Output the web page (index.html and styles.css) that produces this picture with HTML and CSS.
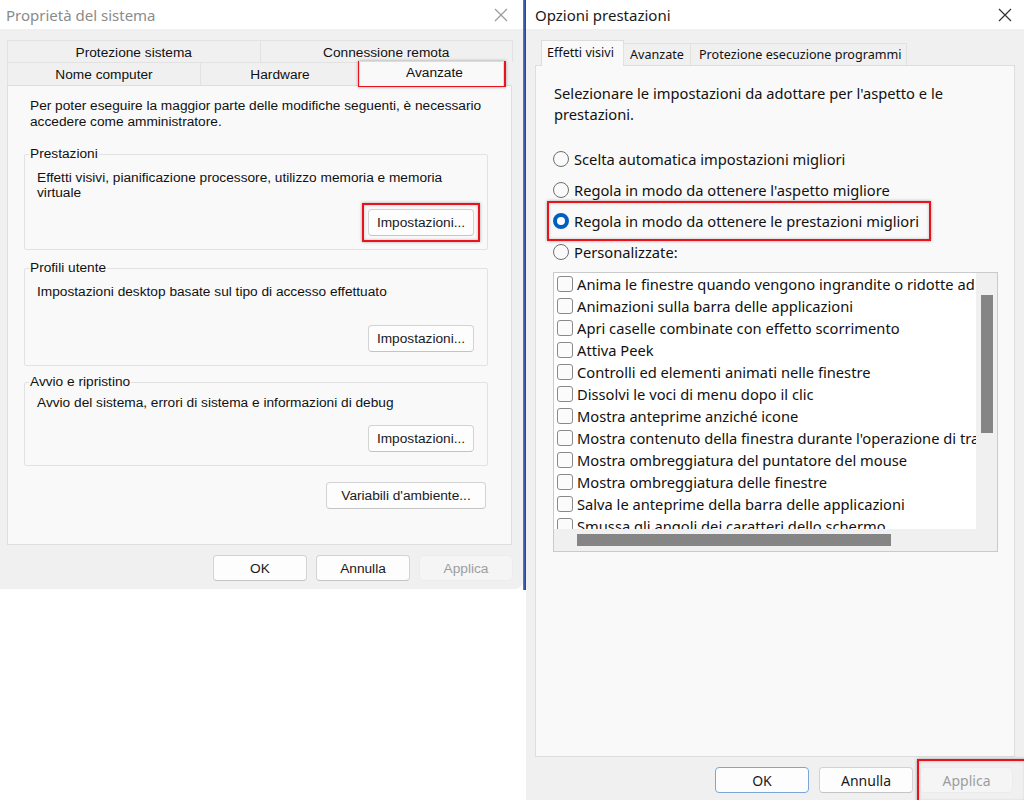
FILE: index.html
```html
<!DOCTYPE html>
<html lang="it">
<head>
<meta charset="utf-8">
<title>Proprietà del sistema - Opzioni prestazioni</title>
<link rel="stylesheet" href="styles.css">
</head>
<body>
<div class="screen">
  <div class="left-col">
    <section class="dialog sys">
      <header class="titlebar">
        <span class="title">Proprietà del sistema</span>
        <svg class="close" width="14" height="14" viewBox="0 0 14 14"><path d="M1 1 L13 13 M13 1 L1 13" stroke="currentColor" stroke-width="1.2" fill="none"/></svg>
      </header>
      <div class="sys-body">
        <div class="tabs2">
          <div class="tabrow back">
            <div class="tab half">Protezione sistema</div>
            <div class="tab half">Connessione remota</div>
          </div>
          <div class="tabrow front">
            <div class="tab t-nome">Nome computer</div>
            <div class="tab t-hw">Hardware</div>
            <div class="tab t-adv active">Avanzate</div>
            <div class="tab-rest"></div>
          </div>
        </div>
        <div class="panel sys-panel">
          <p class="intro">Per poter eseguire la maggior parte delle modifiche seguenti, è necessario<br>accedere come amministratore.</p>
          <fieldset class="group g-perf">
            <legend>Prestazioni</legend>
            <p class="gtext">Effetti visivi, pianificazione processore, utilizzo memoria e memoria<br>virtuale</p>
            <div class="btn-row"><button class="btn btn-set">Impostazioni...</button></div>
          </fieldset>
          <fieldset class="group g-prof">
            <legend>Profili utente</legend>
            <p class="gtext">Impostazioni desktop basate sul tipo di accesso effettuato</p>
            <div class="btn-row"><button class="btn btn-set">Impostazioni...</button></div>
          </fieldset>
          <fieldset class="group g-boot">
            <legend>Avvio e ripristino</legend>
            <p class="gtext">Avvio del sistema, errori di sistema e informazioni di debug</p>
            <div class="btn-row"><button class="btn btn-set">Impostazioni...</button></div>
          </fieldset>
          <div class="env-row"><button class="btn btn-env">Variabili d'ambiente...</button></div>
        </div>
        <div class="footer sys-footer">
          <button class="btn fbtn">OK</button>
          <button class="btn fbtn">Annulla</button>
          <button class="btn fbtn disabled">Applica</button>
        </div>
      </div>
      <div class="mark mark-tab"></div>
      <div class="mark mark-set"></div>
    </section>
  </div>
  <div class="divider"></div>
  <section class="dialog perf">
    <header class="titlebar">
      <span class="title">Opzioni prestazioni</span>
      <svg class="close" width="14" height="14" viewBox="0 0 14 14"><path d="M1 1 L13 13 M13 1 L1 13" stroke="currentColor" stroke-width="1.2" fill="none"/></svg>
    </header>
    <div class="perf-body">
      <div class="ptabs">
        <div class="ptab active">Effetti visivi</div>
        <div class="ptab">Avanzate</div>
        <div class="ptab">Protezione esecuzione programmi</div>
      </div>
      <div class="panel perf-panel">
        <p class="pintro">Selezionare le impostazioni da adottare per l'aspetto e le<br>prestazioni.</p>
        <div class="radios">
          <label class="radio"><span class="rb"></span>Scelta automatica impostazioni migliori</label>
          <label class="radio"><span class="rb"></span>Regola in modo da ottenere l'aspetto migliore</label>
          <label class="radio"><span class="rb on"></span>Regola in modo da ottenere le prestazioni migliori</label>
          <label class="radio"><span class="rb"></span>Personalizzate:</label>
        </div>
        <div class="listbox">
          <ul class="items">
            <li><span class="cb"></span>Anima le finestre quando vengono ingrandite o ridotte ad icona</li>
            <li><span class="cb"></span>Animazioni sulla barra delle applicazioni</li>
            <li><span class="cb"></span>Apri caselle combinate con effetto scorrimento</li>
            <li><span class="cb"></span>Attiva Peek</li>
            <li><span class="cb"></span>Controlli ed elementi animati nelle finestre</li>
            <li><span class="cb"></span>Dissolvi le voci di menu dopo il clic</li>
            <li><span class="cb"></span>Mostra anteprime anziché icone</li>
            <li><span class="cb"></span>Mostra contenuto della finestra durante l'operazione di trascinamento</li>
            <li><span class="cb"></span>Mostra ombreggiatura del puntatore del mouse</li>
            <li><span class="cb"></span>Mostra ombreggiatura delle finestre</li>
            <li><span class="cb"></span>Salva le anteprime della barra delle applicazioni</li>
            <li><span class="cb"></span>Smussa gli angoli dei caratteri dello schermo</li>
            <li><span class="cb"></span>Smussa scorrimento caselle di riepilogo</li>
          </ul>
          <div class="vscroll"><div class="vthumb"></div></div>
          <div class="hscroll"><div class="hthumb"></div></div>
          <div class="corner"></div>
        </div>
      </div>
      <div class="footer perf-footer">
        <button class="btn pbtn default">OK</button>
        <button class="btn pbtn">Annulla</button>
        <button class="btn pbtn disabled">Applica</button>
      </div>
    </div>
    <div class="mark mark-radio"></div>
    <div class="mark mark-apply"></div>
  </section>
</div>
</body>
</html>
```
FILE: styles.css
```css
* { box-sizing: border-box; }

html, body {
  margin: 0;
  padding: 0;
  background: #ffffff;
}

.screen {
  display: flex;
  width: 1024px;
  height: 800px;
  overflow: hidden;
}

/* ---------- shared window parts ---------- */
.dialog {
  position: relative;
  background: #f0f0f0;
}

.titlebar {
  height: 29px;
  background: #ffffff;
  display: flex;
  align-items: center;
  justify-content: space-between;
  font-family: "Segoe UI", "Noto Sans", sans-serif;
  font-size: 15px;
}

.close { display: block; }

.panel {
  background: #f9f9f9;
  border: 1px solid #dedede;
}

.btn {
  display: block;
  background: #fdfdfd;
  border: 1px solid #d3d3d3;
  border-bottom-color: #c4c4c4;
  border-radius: 4px;
  color: #1a1a1a;
  padding: 0;
  margin: 0;
}

.btn.disabled {
  background: #f5f5f5;
  border-color: #ececec;
  color: #9d9d9d;
}

.footer {
  display: flex;
  justify-content: flex-end;
}

/* red highlight frames drawn over the windows */
.mark {
  position: absolute;
  border: 2px solid #e8131b;
  box-shadow: 0 0 3px rgba(0, 0, 0, 0.35), inset 0 0 3px rgba(0, 0, 0, 0.25);
  pointer-events: none;
}

/* ---------- left window: Proprietà del sistema ---------- */
.left-col {
  width: 523px;
  flex: none;
}

.sys {
  height: 589px;
  border-bottom-right-radius: 8px;
  font-family: "Liberation Sans", Arial, sans-serif;
  font-size: 13.7px;
  color: #111;
}

.sys .titlebar {
  padding: 0 15px 0 6px;
}

.sys .title { color: #8b8b8b; }
.sys .close { color: #9a9a9a; }

.sys-body {
  padding: 11px 11px 0 7px;
}

.tabrow {
  display: flex;
  height: 22px;
}

.tab {
  display: flex;
  align-items: center;
  justify-content: center;
  background: #f0f0f0;
  border: 1px solid #e2e2e2;
  border-bottom: none;
  margin-right: -1px;
  line-height: 15px;
  white-space: nowrap;
}

.tab.half { flex: 1; }
.back .tab { padding-top: 2px; }

.front {
  height: 23px;
  position: relative;
}

.t-nome { width: 194px; }
.t-hw { width: 160px; }
.t-adv { width: 145px; }

.tab.active {
  background: #f9f9f9;
  border-color: #dcdcdc;
  margin-top: -1px;
  height: 25px;
  align-items: flex-start;
  padding-top: 3px;
  padding-left: 6px;
  position: relative;
  z-index: 1;
}

.tab-rest { flex: 1; }

.sys-panel {
  height: 460px;
  padding: 0 23px 0 16px;
}

.intro {
  margin: 12px 0 0 6px;
  line-height: 16px;
  white-space: nowrap;
}

.group {
  margin: 0;
  min-width: 0;
  border: 1px solid #e2e2e2;
  border-radius: 2px;
  padding: 0 13px 13px 12px;
}

.group legend {
  padding: 0 1px;
  margin-left: -8px;
  line-height: 16px;
  color: #111;
}

.gtext {
  margin: 0;
  line-height: 15px;
  white-space: nowrap;
}

.btn-row {
  display: flex;
  justify-content: flex-end;
}

.btn-set {
  width: 106px;
  height: 27px;
  font: inherit;
}

.g-perf { margin-top: 16px; }
.g-perf .gtext { margin-top: 8px; }
.g-perf .btn-row { margin-top: 9px; }

.g-prof { margin-top: 10px; padding-bottom: 13px; }
.g-prof .gtext { margin-top: 8px; }
.g-prof .btn-row { margin-top: 26px; }

.g-boot { margin-top: 8px; }
.g-boot .gtext { margin-top: 5px; }
.g-boot .btn-row { margin-top: 15px; }

.env-row {
  display: flex;
  justify-content: flex-end;
  margin: 16px 2px 0 0;
}

.btn-env {
  width: 160px;
  height: 27px;
  font: inherit;
}

.sys-footer {
  gap: 9px;
  padding-top: 10px;
  margin-right: -1px;
}

.fbtn {
  width: 94px;
  height: 26px;
  font-family: "Liberation Sans", Arial, sans-serif;
  font-size: 13.7px;
}

.mark-tab { left: 358px; top: 61px; width: 148px; height: 26px; }
.mark-set { left: 362px; top: 203px; width: 118px; height: 39px; }

.divider {
  width: 3px;
  height: 590px;
  flex: none;
  background: linear-gradient(to right, #6a7fb8, #3552a6 60%, #2d3f80);
}

/* ---------- right window: Opzioni prestazioni ---------- */
.perf {
  flex: 1;
  height: 800px;
  font-family: "Segoe UI", "Noto Sans", sans-serif;
  color: #111;
}

.perf .titlebar { padding: 0 12px 0 9px; }
.perf .title { color: #1a1a1a; }
.perf .close { color: #333; }

.perf-body {
  padding: 11px 9px 0 9px;
}

.ptabs {
  display: flex;
  height: 25px;
  padding-left: 6px;
  align-items: flex-end;
  position: relative;
  z-index: 1;
  font-size: 12.6px;
}

.ptab {
  height: 22px;
  display: flex;
  align-items: center;
  padding: 0 6px;
  background: #f0f0f0;
  border: 1px solid #e1e1e1;
  border-bottom: none;
  margin-right: -1px;
  white-space: nowrap;
}

.ptab:nth-child(2) { width: 68px; }
.ptab:nth-child(3) { width: 217px; padding-left: 8px; }

.ptab.active {
  height: 26px;
  width: 83px;
  background: #f9f9f9;
  border-color: #dcdcdc;
  margin-bottom: -1px;
  padding-bottom: 3px;
  padding-left: 5px;
}

.perf-panel {
  height: 692px;
  padding: 0 16px 0 17px;
}

.pintro {
  margin: 17px 0 0 1px;
  font-size: 14.7px;
  line-height: 21px;
}

.radios {
  margin-top: 18px;
  display: flex;
  flex-direction: column;
}

.radio {
  height: 31px;
  display: flex;
  align-items: center;
  gap: 5px;
  font-size: 14.7px;
  white-space: nowrap;
}

.rb {
  width: 16px;
  height: 16px;
  border-radius: 50%;
  border: 1px solid #6e6e6e;
  background: #fafafa;
  flex: none;
}

.rb.on {
  border: 4px solid #0060c0;
  background: #ffffff;
}

.listbox {
  margin-top: 5px;
  width: 445px;
  height: 280px;
  border: 1px solid #cacaca;
  background: #f0f0f0;
  display: grid;
  grid-template-columns: 1fr 21px;
  grid-template-rows: 1fr 22px;
}

.items {
  list-style: none;
  margin: 0;
  padding: 0 0 0 3px;
  background: #ffffff;
  overflow: hidden;
  font-size: 14.7px;
}

.items li {
  height: 22px;
  display: flex;
  align-items: center;
  gap: 4px;
  white-space: nowrap;
}

.cb {
  width: 16px;
  height: 16px;
  border: 1px solid #8a8a8a;
  border-radius: 3px;
  background: #fbfbfb;
  flex: none;
}

.vscroll {
  padding: 22px 0 0 5px;
}

.vthumb {
  width: 12px;
  height: 138px;
  background: #858585;
}

.hscroll {
  padding: 5px 0 0 23px;
}

.hthumb {
  width: 314px;
  height: 12px;
  background: #858585;
}

.perf-footer {
  padding-top: 10px;
  gap: 10px;
  margin-right: 2px;
}

.pbtn {
  width: 94px;
  height: 26px;
  font-family: "Segoe UI", "Noto Sans", sans-serif;
  font-size: 14px;
}

.pbtn.default {
  border: 1px solid #7aa7d8;
}

.pbtn.disabled {
  width: 93px;
  margin-left: -3px;
}

.mark-radio { left: 21px; top: 201px; width: 384px; height: 40px; }
.mark-apply { left: 391px; top: 759px; width: 110px; height: 44px; }
```
